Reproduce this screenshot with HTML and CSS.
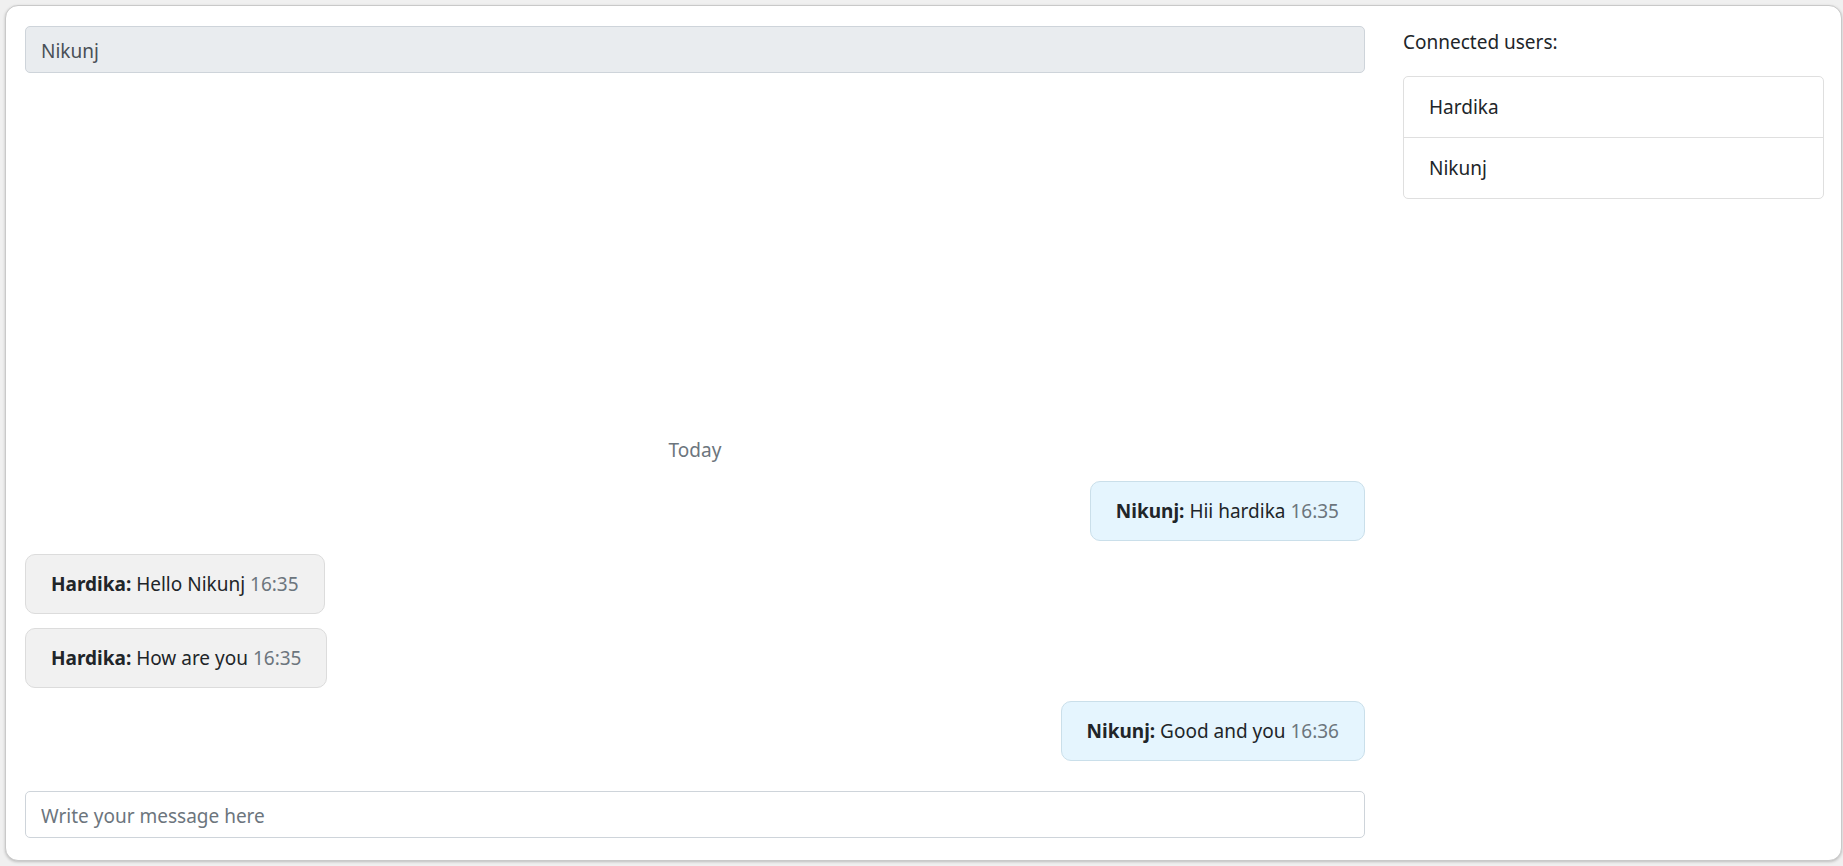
FILE: index.html
```html
<!DOCTYPE html>
<html lang="en">
<head>
<meta charset="utf-8">
<title>Chat</title>
<link rel="stylesheet" href="styles.css">
</head>
<body>
<div class="card">
  <div class="chat-col">
    <input class="form-control header-input" type="text" value="Nikunj" readonly>
    <div class="messages">
      <div class="day">Today</div>
      <div class="msg mine"><b>Nikunj:</b> Hii hardika <span class="time">16:35</span></div>
      <div class="msg theirs"><b>Hardika:</b> Hello Nikunj <span class="time">16:35</span></div>
      <div class="msg theirs"><b>Hardika:</b> How are you <span class="time">16:35</span></div>
      <div class="msg mine"><b>Nikunj:</b> Good and you <span class="time">16:36</span></div>
    </div>
    <input class="form-control msg-input" type="text" placeholder="Write your message here">
  </div>
  <div class="users-col">
    <div class="users-label">Connected users:</div>
    <ul class="list-group">
      <li class="list-item">Hardika</li>
      <li class="list-item">Nikunj</li>
    </ul>
  </div>
</div>
</body>
</html>
```

FILE: styles.css
```css
* { box-sizing: border-box; }
html, body { height: 100%; }
body {
  margin: 0;
  background: #f0f0f0;
  font-family: "Noto Sans", "Open Sans", sans-serif;
  font-size: 19px;
  line-height: 30px;
  color: #212529;
}
.card {
  margin: 5px 1px 5px 5px;
  height: calc(100vh - 10px);
  background: #fff;
  border: 1px solid #c9c9c9;
  border-radius: 13px;
  box-shadow: 0 1px 3px rgba(0,0,0,0.22);
  padding: 20px 17px 22px 19px;
  display: flex;
  gap: 38px;
}
.chat-col {
  width: 1340px;
  display: flex;
  flex-direction: column;
}
.users-col {
  flex: 1;
  padding-top: 1px;
}
.form-control {
  display: block;
  width: 100%;
  height: 47px;
  padding: 8px 15px 6px;
  font: inherit;
  color: #495057;
  border: 1px solid #ced4da;
  border-radius: 5px;
  background: #fff;
  outline: none;
}
.header-input { background: #e9ecef; }
.msg-input::placeholder { color: #6c757d; opacity: 1; }
.messages {
  flex: 1;
  display: flex;
  flex-direction: column;
  justify-content: flex-end;
  gap: 13.5px;
  padding-bottom: 30px;
}
.day {
  text-align: center;
  color: #6c757d;
  margin-bottom: 2px;
}
.msg {
  padding: 14px 25px;
  border: 1px solid #dcdcdc;
  border-radius: 10px;
  background: #f1f1f1;
  align-self: flex-start;
}
.msg.mine {
  align-self: flex-end;
  background: #e5f5fe;
  border-color: #cadfea;
}
.msg b { font-weight: 700; }
.time { color: #6c757d; }
.users-label {
  margin-bottom: 19px;
}
.list-group {
  list-style: none;
  margin: 0;
  padding: 0;
  border: 1px solid #dfdfdf;
  border-radius: 5px;
}
.list-item {
  padding: 15px 25px;
}
.list-item + .list-item {
  border-top: 1px solid #dfdfdf;
}
```
